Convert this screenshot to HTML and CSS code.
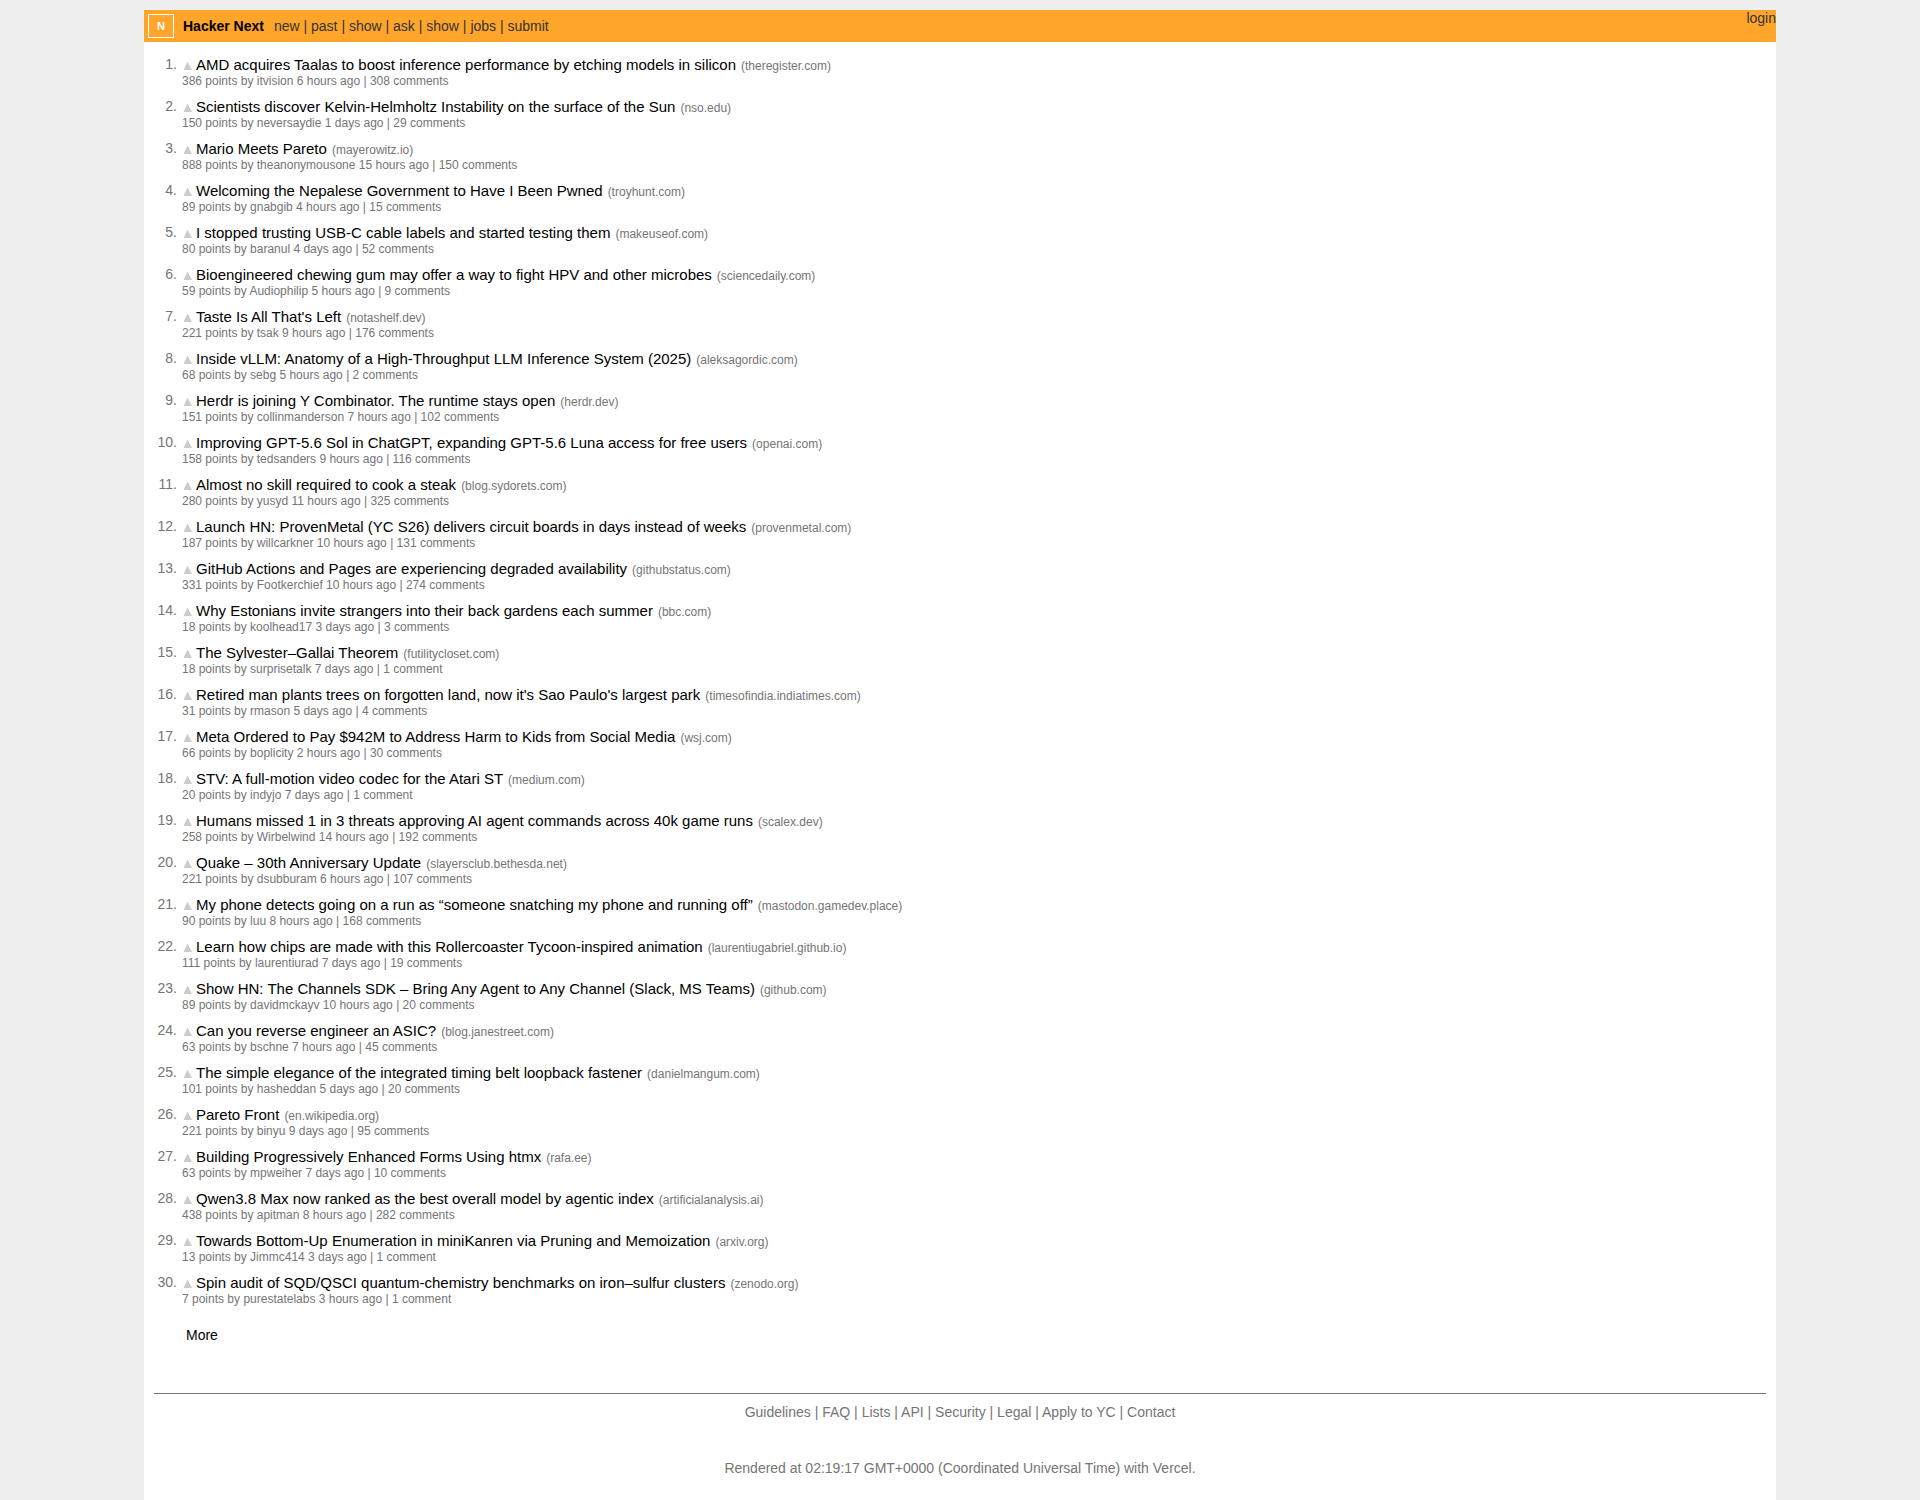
FILE: index.html
```html
<!DOCTYPE html>
<html lang="en">

<head>
    <meta charset="UTF-8">
    <meta name="viewport" content="width=device-width, initial-scale=1.0">
    <title>Hacker Next</title>
    <link rel="stylesheet" href="styles.css">
</head>

<body>

    <div class="container">
        <header class="header">
            <a href="#" class="brand">
                <span class="logo">N</span>
                <span class="site-title">Hacker Next</span>
            </a>
            <nav class="nav">
                <a href="#">new</a> | <a href="#">past</a> | <a href="#">show</a> | <a href="#">ask</a> | <a href="#">show</a> | <a href="#">jobs</a> | <a href="#">submit</a>
            </nav>
            <a href="#" class="login">login</a>
        </header>

        <main class="content">
            <ol class="stories" id="stories"></ol>
            <a href="#" class="more">More</a>
        </main>

        <footer class="footer">
            <nav>
                <a href="#">Guidelines</a> | <a href="#">FAQ</a> | <a href="#">Lists</a> | <a href="#">API</a> | <a href="#">Security</a> | <a href="#">Legal</a> | <a href="#">Apply to YC</a> | <a href="#">Contact</a>
            </nav>
            <p class="rendered">Rendered at 02:19:17 GMT+0000 (Coordinated Universal Time) with Vercel.</p>
        </footer>
    </div>

    <script src="script.js"></script>

</body>

</html>
```

FILE: styles.css
```css
/* Global Styles */
body {
    margin: 0;
    padding: 10px 0 0;
    background-color: #eee;
    color: #000;
    font-family: Arial, "Liberation Sans", sans-serif;
    font-size: 14px;
    line-height: 16px;
}

a {
    color: inherit;
    text-decoration: none;
}

a:hover {
    text-decoration: underline;
}

.container {
    width: 85%;
    min-height: calc(100vh - 10px);
    margin: 0 auto;
    background-color: #fff;
}

/* Header */
.header {
    display: flex;
    align-items: center;
    height: 32px;
    padding-left: 4px;
    background-color: #ffa52a;
    color: #333;
}

.brand {
    display: flex;
    align-items: center;
    gap: 9px;
    margin-right: 10px;
}

.logo {
    box-sizing: border-box;
    width: 26px;
    height: 24px;
    border: 1px solid #fff;
    color: #fff;
    font-size: 11px;
    font-weight: bold;
    line-height: 22px;
    text-align: center;
}

.site-title {
    color: #000;
    font-weight: bold;
}

.login {
    align-self: flex-start;
    margin-left: auto;
}

/* Stories */
.content {
    padding: 10px;
}

.stories {
    margin: 0;
    padding: 0;
    list-style: none;
}

.story {
    display: flex;
    padding: 3px 0 6px;
}

.rank {
    width: 23px;
    margin-right: 5px;
    color: #757575;
    line-height: 18px;
    text-align: right;
}

.title-line {
    display: flex;
    align-items: baseline;
}

.vote {
    margin-right: 4px;
    padding: 0;
    border: none;
    background: none;
    color: #ccc;
    cursor: pointer;
}

.vote svg {
    display: block;
}

.title {
    font-size: 15px;
    line-height: 19px;
}

.source {
    margin-left: 5px;
    color: #757575;
    font-size: 12px;
}

.meta {
    color: #757575;
    font-size: 12px;
    line-height: 14px;
}

.more {
    display: inline-block;
    margin: 15px 0 0 32px;
}

/* Footer */
.footer {
    margin: 40px 10px 0;
    padding: 10px 0 22px;
    border-top: 1px solid #757575;
    color: #757575;
    text-align: center;
}

.rendered {
    margin: 40px 0 0;
}
```

FILE: script.js
```js
// title, source, points, user, age, comments
const stories = [
    ['AMD acquires Taalas to boost inference performance by etching models in silicon', 'theregister.com', 386, 'itvision', '6 hours', 308],
    ['Scientists discover Kelvin-Helmholtz Instability on the surface of the Sun', 'nso.edu', 150, 'neversaydie', '1 days', 29],
    ['Mario Meets Pareto', 'mayerowitz.io', 888, 'theanonymousone', '15 hours', 150],
    ['Welcoming the Nepalese Government to Have I Been Pwned', 'troyhunt.com', 89, 'gnabgib', '4 hours', 15],
    ['I stopped trusting USB-C cable labels and started testing them', 'makeuseof.com', 80, 'baranul', '4 days', 52],
    ['Bioengineered chewing gum may offer a way to fight HPV and other microbes', 'sciencedaily.com', 59, 'Audiophilip', '5 hours', 9],
    ['Taste Is All That\'s Left', 'notashelf.dev', 221, 'tsak', '9 hours', 176],
    ['Inside vLLM: Anatomy of a High-Throughput LLM Inference System (2025)', 'aleksagordic.com', 68, 'sebg', '5 hours', 2],
    ['Herdr is joining Y Combinator. The runtime stays open', 'herdr.dev', 151, 'collinmanderson', '7 hours', 102],
    ['Improving GPT-5.6 Sol in ChatGPT, expanding GPT-5.6 Luna access for free users', 'openai.com', 158, 'tedsanders', '9 hours', 116],
    ['Almost no skill required to cook a steak', 'blog.sydorets.com', 280, 'yusyd', '11 hours', 325],
    ['Launch HN: ProvenMetal (YC S26) delivers circuit boards in days instead of weeks', 'provenmetal.com', 187, 'willcarkner', '10 hours', 131],
    ['GitHub Actions and Pages are experiencing degraded availability', 'githubstatus.com', 331, 'Footkerchief', '10 hours', 274],
    ['Why Estonians invite strangers into their back gardens each summer', 'bbc.com', 18, 'koolhead17', '3 days', 3],
    ['The Sylvester–Gallai Theorem', 'futilitycloset.com', 18, 'surprisetalk', '7 days', 1],
    ['Retired man plants trees on forgotten land, now it\'s Sao Paulo\'s largest park', 'timesofindia.indiatimes.com', 31, 'rmason', '5 days', 4],
    ['Meta Ordered to Pay $942M to Address Harm to Kids from Social Media', 'wsj.com', 66, 'boplicity', '2 hours', 30],
    ['STV: A full-motion video codec for the Atari ST', 'medium.com', 20, 'indyjo', '7 days', 1],
    ['Humans missed 1 in 3 threats approving AI agent commands across 40k game runs', 'scalex.dev', 258, 'Wirbelwind', '14 hours', 192],
    ['Quake – 30th Anniversary Update', 'slayersclub.bethesda.net', 221, 'dsubburam', '6 hours', 107],
    ['My phone detects going on a run as “someone snatching my phone and running off”', 'mastodon.gamedev.place', 90, 'luu', '8 hours', 168],
    ['Learn how chips are made with this Rollercoaster Tycoon-inspired animation', 'laurentiugabriel.github.io', 111, 'laurentiurad', '7 days', 19],
    ['Show HN: The Channels SDK – Bring Any Agent to Any Channel (Slack, MS Teams)', 'github.com', 89, 'davidmckayv', '10 hours', 20],
    ['Can you reverse engineer an ASIC?', 'blog.janestreet.com', 63, 'bschne', '7 hours', 45],
    ['The simple elegance of the integrated timing belt loopback fastener', 'danielmangum.com', 101, 'hasheddan', '5 days', 20],
    ['Pareto Front', 'en.wikipedia.org', 221, 'binyu', '9 days', 95],
    ['Building Progressively Enhanced Forms Using htmx', 'rafa.ee', 63, 'mpweiher', '7 days', 10],
    ['Qwen3.8 Max now ranked as the best overall model by agentic index', 'artificialanalysis.ai', 438, 'apitman', '8 hours', 282],
    ['Towards Bottom-Up Enumeration in miniKanren via Pruning and Memoization', 'arxiv.org', 13, 'Jimmc414', '3 days', 1],
    ['Spin audit of SQD/QSCI quantum-chemistry benchmarks on iron–sulfur clusters', 'zenodo.org', 7, 'purestatelabs', '3 hours', 1],
];

const list = document.getElementById('stories');

list.innerHTML = stories.map(([title, source, points, user, age, comments], i) => `
    <li class="story">
        <span class="rank">${i + 1}.</span>
        <div>
            <div class="title-line">
                <button class="vote" aria-label="Upvote"><svg width="10" height="9" viewBox="0 0 10 9"><path d="M5.5 0.5 L10 9 H1.5 Z" fill="currentColor"/></svg></button>
                <a href="#" class="title">${title}</a>
                <a href="#" class="source">(${source})</a>
            </div>
            <div class="meta">
                ${points} points by <a href="#">${user}</a> ${age} ago | <a href="#">${comments} ${comments === 1 ? 'comment' : 'comments'}</a>
            </div>
        </div>
    </li>`).join('');
```
